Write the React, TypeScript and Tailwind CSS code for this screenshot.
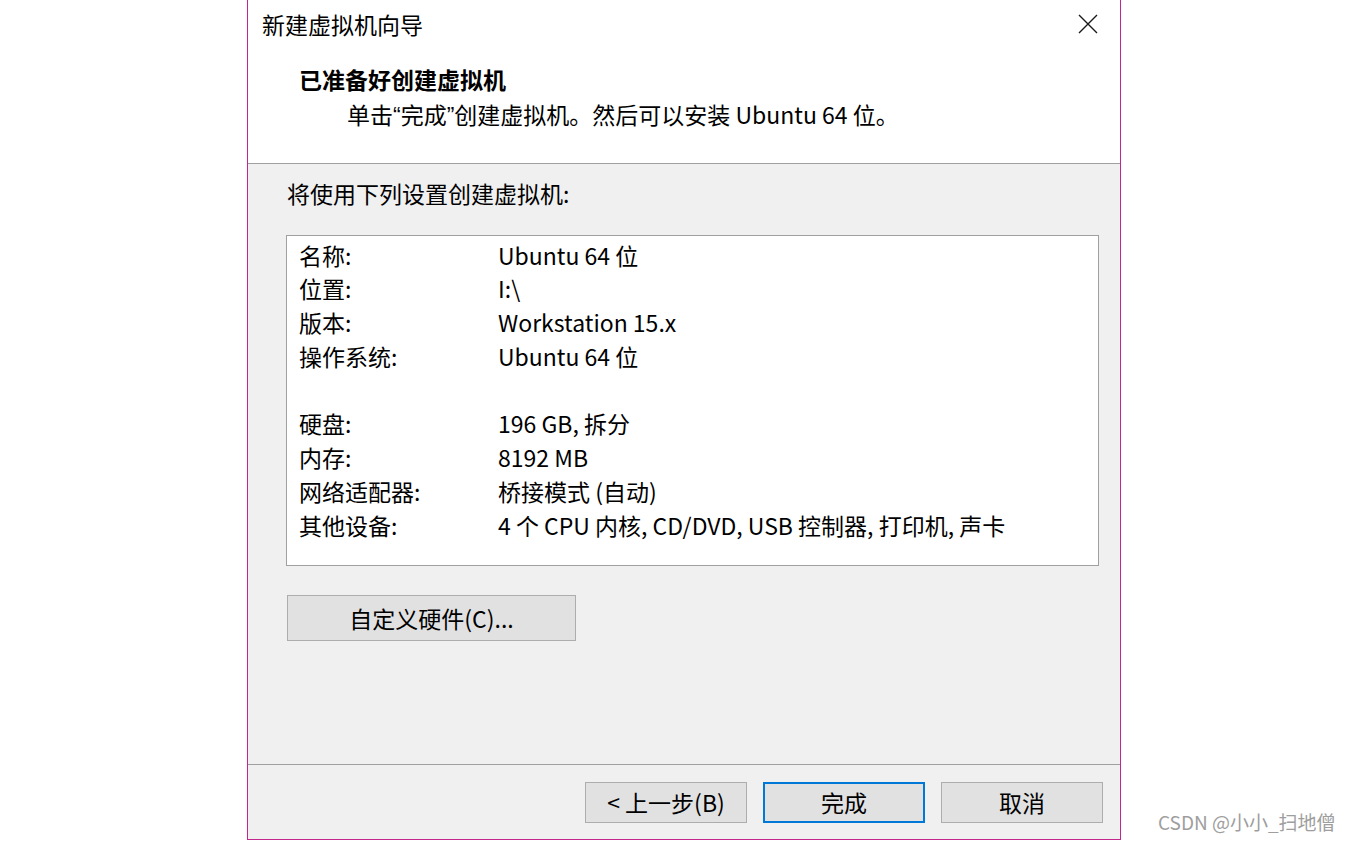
import React from 'react';

const SUMMARY: { label: string; value: string }[] = [
  { label: '名称:', value: 'Ubuntu 64 位' },
  { label: '位置:', value: 'I:\\' },
  { label: '版本:', value: 'Workstation 15.x' },
  { label: '操作系统:', value: 'Ubuntu 64 位' },
  { label: '', value: '' },
  { label: '硬盘:', value: '196 GB, 拆分' },
  { label: '内存:', value: '8192 MB' },
  { label: '网络适配器:', value: '桥接模式 (自动)' },
  { label: '其他设备:', value: '4 个 CPU 内核, CD/DVD, USB 控制器, 打印机, 声卡' },
];

function CloseIcon() {
  return (
    <svg width="20" height="20" viewBox="0 0 20 20" className="block">
      <path d="M1 1 L19 19 M19 1 L1 19" stroke="#1a1a1a" strokeWidth="1.4" fill="none" />
    </svg>
  );
}

function DialogButton({ label, primary = false }: { label: string; primary?: boolean }) {
  return (
    <button
      className={`h-[41px] w-[162px] bg-[#e1e1e1] text-[23px] leading-none text-black ${
        primary ? 'border-2 border-[#0078d7]' : 'border border-[#adadad]'
      }`}
    >
      {label}
    </button>
  );
}

export default function App() {
  return (
    <div
      className="relative h-[841px] w-[1355px] overflow-hidden bg-white text-black"
      style={{ fontFamily: '"Noto Sans CJK SC", "Microsoft YaHei", sans-serif' }}
    >
      <div className="ml-[247px] flex h-[840px] w-[874px] flex-col border-x border-b border-[#c4268f]">
        {/* Header */}
        <div className="h-[164px] shrink-0 border-b border-[#a0a0a0] bg-white">
          <div className="flex items-center justify-between pl-[14px] pr-[22px] pt-[8px]">
            <span className="text-[23px] leading-[32px]">新建虚拟机向导</span>
            <CloseIcon />
          </div>
          <div className="pl-[51px] pt-[23px] text-[23px] font-bold leading-[32px]">已准备好创建虚拟机</div>
          <div className="pl-[99px] pt-[3px] text-[23px] leading-[32px]">
            单击<span className="font-['Liberation_Sans']">“</span>完成<span className="font-['Liberation_Sans']">”</span>创建虚拟机。然后可以安装 Ubuntu 64 位。
          </div>
        </div>

        {/* Body */}
        <div className="flex flex-1 flex-col border-b border-[#a0a0a0] bg-[#f0f0f0] px-[38px] pt-[13px]">
          <div className="pl-[1px] text-[23px] leading-[32px]">将使用下列设置创建虚拟机:</div>
          <div className="mt-[26px] h-[331px] w-[813px] border border-[#a0a0a0] bg-white pl-[12px] pt-[2px]">
            {SUMMARY.map((row, i) => (
              <div key={i} className="flex h-[33.75px] items-center text-[23px]">
                <span className="w-[199px] shrink-0">{row.label}</span>
                <span>{row.value}</span>
              </div>
            ))}
          </div>
          <button className="mt-[29px] ml-[1px] h-[46px] w-[289px] border border-[#adadad] bg-[#e1e1e1] text-[23px] leading-none">
            自定义硬件(C)...
          </button>
        </div>

        {/* Footer */}
        <div className="flex h-[74px] shrink-0 justify-end gap-[16px] bg-[#f0f0f0] pr-[17px] pt-[17px]">
          <DialogButton label="< 上一步(B)" />
          <DialogButton label="完成" primary />
          <DialogButton label="取消" />
        </div>
      </div>

      {/* watermark */}
      <div className="absolute left-[1158px] top-[809px] text-[19px] leading-[26px] text-[#9e9e9e]">
        CSDN @小小_扫地僧
      </div>
    </div>
  );
}
